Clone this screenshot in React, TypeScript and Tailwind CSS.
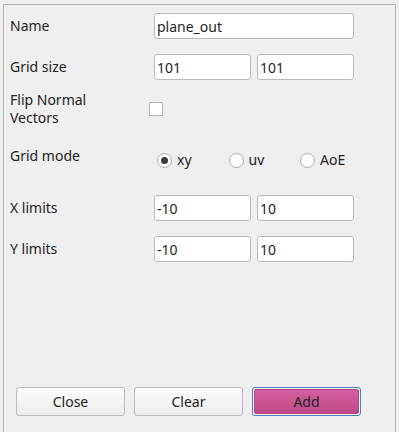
import React from 'react';

const font = { fontFamily: '"Noto Sans", "DejaVu Sans", sans-serif' };

const Field: React.FC<{ value: string; wide?: boolean }> = ({ value, wide }) => (
  <div
    className={`${wide ? 'w-[200px]' : 'w-[97px]'} h-[26px] bg-white border border-[#b9b9b9] rounded-[3px] flex items-center pl-[2px] text-[14px] text-[#1e1e1e]`}
  >
    {value}
  </div>
);

const Radio: React.FC<{ label: string; checked?: boolean }> = ({ label, checked }) => (
  <div className="w-[71.5px] flex items-center gap-[5px]">
    <span className="w-[15px] h-[15px] rounded-full border border-[#a9a9a9] bg-white flex items-center justify-center">
      {checked && <span className="w-[7px] h-[7px] rounded-full bg-[#3a3a3a]" />}
    </span>
    <span className="text-[14px] leading-[18px]">{label}</span>
  </div>
);

const Row: React.FC<{ label: React.ReactNode; className?: string; children: React.ReactNode }> = ({ label, className, children }) => (
  <div className={`flex items-center ${className ?? ''}`}>
    <div className="w-[150px] pl-[6px] text-[14px] leading-[18px]">{label}</div>
    <div className="flex gap-[6px]">{children}</div>
  </div>
);

const Button: React.FC<{ label: string; primary?: boolean }> = ({ label, primary }) => (
  <div
    className={
      primary
        ? 'w-[109px] h-[29px] rounded-[3px] border border-[#4a82b8] flex p-[1px]'
        : 'w-[109px] h-[29px] rounded-[3px] border border-[#bcbcbc] bg-gradient-to-b from-[#fcfcfc] to-[#ececec] flex items-center justify-center text-[14px]'
    }
  >
    {primary ? (
      <div className="flex-1 rounded-[2px] border border-[#b14a84] bg-gradient-to-b from-[#d65f9f] to-[#bf4a88] flex items-center justify-center text-[14px]">
        {label}
      </div>
    ) : (
      label
    )}
  </div>
);

export default function App() {
  return (
    <div className="w-[399px] h-[432px] overflow-hidden bg-[#efefef] pt-[4px] pl-[3px] text-[#232323]" style={font}>
      <div className="w-[393px] h-[440px] border border-[#b4b4b4] flex flex-col">
        <Row label="Name" className="mt-[8px]">
          <Field value="plane_out" wide />
        </Row>
        <Row label="Grid size" className="mt-[15px]">
          <Field value="101" />
          <Field value="101" />
        </Row>
        <div className="flex items-center mt-[11px] h-[36px]">
          <div className="w-[145px] pl-[6px] text-[14px] leading-[18px]">
            Flip Normal
            <br />
            Vectors
          </div>
          <span className="w-[14px] h-[14px] bg-white border border-[#b3b3b3] rounded-[1px]" />
        </div>
        <div className="flex items-start mt-[20px]">
          <div className="w-[153px] pl-[6px] text-[14px] leading-[18px]">Grid mode</div>
          <div className="flex mt-[4px]">
            <Radio label="xy" checked />
            <Radio label="uv" />
            <Radio label="AoE" />
          </div>
        </div>
        <Row label="X limits" className="mt-[26px]">
          <Field value="-10" />
          <Field value="10" />
        </Row>
        <Row label="Y limits" className="mt-[15px]">
          <Field value="-10" />
          <Field value="10" />
        </Row>
        <div className="flex gap-[9px] pl-[12px] mt-[125px]">
          <Button label="Close" />
          <Button label="Clear" />
          <Button label="Add" primary />
        </div>
      </div>
    </div>
  );
}
